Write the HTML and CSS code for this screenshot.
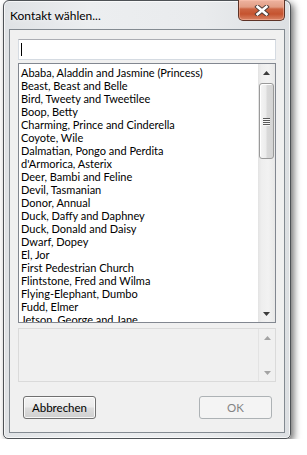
FILE: index.html
```html
<!DOCTYPE html>
<html>
<head>
<meta charset="utf-8">
<link rel="stylesheet" href="styles.css">
</head>
<body>
<div class="window">
  <div class="titlebar">
    <span class="title">Kontakt wählen...</span>
    <div class="close">
      <svg width="16" height="11" viewBox="0 0 16 11">
        <path d="M3.5 1.8 L12.5 9.2 M12.5 1.8 L3.5 9.2" stroke="#4a3a36" stroke-width="4.4" stroke-linecap="square" fill="none"/>
        <path d="M3.5 1.8 L12.5 9.2 M12.5 1.8 L3.5 9.2" stroke="#ffffff" stroke-width="2.6" stroke-linecap="square" fill="none"/>
      </svg>
    </div>
  </div>
  <div class="client">
    <div class="search"><span class="caret"></span></div>
    <div class="list">
      <ul class="items">
        <li>Ababa, Aladdin and Jasmine (Princess)</li>
        <li>Beast, Beast and Belle</li>
        <li>Bird, Tweety and Tweetilee</li>
        <li>Boop, Betty</li>
        <li>Charming, Prince and Cinderella</li>
        <li>Coyote, Wile</li>
        <li>Dalmatian, Pongo and Perdita</li>
        <li>d'Armorica, Asterix</li>
        <li>Deer, Bambi and Feline</li>
        <li>Devil, Tasmanian</li>
        <li>Donor, Annual</li>
        <li>Duck, Daffy and Daphney</li>
        <li>Duck, Donald and Daisy</li>
        <li>Dwarf, Dopey</li>
        <li>El, Jor</li>
        <li>First Pedestrian Church</li>
        <li>Flintstone, Fred and Wilma</li>
        <li>Flying-Elephant, Dumbo</li>
        <li>Fudd, Elmer</li>
        <li>Jetson, George and Jane</li>
      </ul>
      <div class="scrollbar">
        <div class="sb-btn"><svg width="7" height="4" viewBox="0 0 7 4"><path d="M0 4 L3.5 0 L7 4 Z" fill="#3c3c3c"/></svg></div>
        <div class="sb-track">
          <div class="thumb">
            <span class="grip"></span><span class="grip"></span><span class="grip"></span><span class="grip"></span>
          </div>
        </div>
        <div class="sb-btn"><svg width="7" height="4" viewBox="0 0 7 4"><path d="M0 0 L7 0 L3.5 4 Z" fill="#3c3c3c"/></svg></div>
      </div>
    </div>
    <div class="detail">
      <div class="detail-body"></div>
      <div class="scrollbar disabled">
        <div class="sb-btn"><svg width="7" height="4" viewBox="0 0 7 4"><path d="M0 4 L3.5 0 L7 4 Z" fill="#a3a3a3"/></svg></div>
        <div class="sb-track"></div>
        <div class="sb-btn"><svg width="7" height="4" viewBox="0 0 7 4"><path d="M0 0 L7 0 L3.5 4 Z" fill="#a3a3a3"/></svg></div>
      </div>
    </div>
    <div class="buttons">
      <button class="btn">Abbrechen</button>
      <button class="btn" disabled>OK</button>
    </div>
  </div>
</div>
</body>
</html>
```

FILE: styles.css
```css
html, body {
  margin: 0;
  padding: 0;
  background: #ffffff;
}

body {
  font-family: Lato, Roboto, sans-serif;
  font-size: 12px;
  color: #000;
}

.window {
  margin-left: 3px;
  width: 286px;
  height: 437px;
  border: 1px solid #4e5256;
  border-radius: 6px 6px 5px 5px;
  background: linear-gradient(90deg, #dfe2e5 0%, #eceef0 30%, #e9ebed 70%, #dcdfe2 100%);
  box-shadow: 3px 3px 7px rgba(0, 0, 0, 0.55), inset 0 0 0 1px rgba(255, 255, 255, 0.7);
  display: flex;
  flex-direction: column;
}

.titlebar {
  height: 28px;
  display: flex;
  align-items: flex-start;
  padding-left: 6px;
  padding-right: 5px;
}

.title {
  margin-top: 7px;
  font-size: 12px;
  line-height: 15px;
  color: #000;
  text-shadow: 0 0 6px rgba(255, 255, 255, 0.9);
}

.close {
  margin-left: auto;
  margin-top: -1px;
  width: 45px;
  height: 20px;
  border: 1px solid #5d3226;
  border-top: none;
  border-radius: 0 0 5px 5px;
  background: linear-gradient(180deg, #eeb4a0 0%, #e29d84 35%, #cc6442 45%, #c5532f 70%, #d98466 100%);
  box-shadow: inset 0 0 0 1px rgba(255, 200, 180, 0.45);
  display: flex;
  align-items: center;
  justify-content: center;
}

.close svg {
  display: block;
}

.client {
  margin: 0 5px;
  height: 402px;
  border: 1px solid #838a91;
  background: #f0f0f0;
  display: flex;
  flex-direction: column;
  padding: 0 8px;
}

.search {
  margin-top: 9px;
  height: 19px;
  border: 1px solid #d5dbe2;
  border-top-color: #abadb3;
  background: #fff;
  display: flex;
  align-items: center;
  padding-left: 2px;
}

.caret {
  width: 1px;
  height: 13px;
  background: #000;
}

.list {
  margin-top: 3px;
  height: 258px;
  border: 1px solid #828790;
  background: #fff;
  display: flex;
  overflow: hidden;
}

.items {
  list-style: none;
  margin: 0;
  padding: 2px 0 0 2px;
  flex: 1;
  overflow: hidden;
}

.items li {
  height: 13px;
  font-size: 11px;
  line-height: 13px;
  white-space: nowrap;
  color: #000;
}

.scrollbar {
  width: 17px;
  display: flex;
  flex-direction: column;
  background: linear-gradient(90deg, #e3e3e3 0%, #eeeeee 20%, #f2f2f2 60%, #e8e8e8 100%);
}

.sb-btn {
  height: 17px;
  display: flex;
  align-items: center;
  justify-content: center;
}

.sb-btn svg {
  display: block;
}

.sb-track {
  flex: 1;
  padding: 2px 0 0 0;
}

.thumb {
  height: 74px;
  margin: 0 1px;
  border: 1px solid #9a9a9a;
  border-radius: 3px;
  background: linear-gradient(90deg, #f5f5f5 0%, #ececec 45%, #d9d9d9 55%, #d4d4d4 100%);
  box-shadow: inset 1px 1px 0 #ffffff;
  display: flex;
  flex-direction: column;
  align-items: center;
  justify-content: center;
  gap: 1px;
}

.grip {
  width: 7px;
  height: 1px;
  background: #5a5a5a;
  box-shadow: 0 1px 0 #f8f8f8;
}

.detail {
  margin-top: 5px;
  height: 52px;
  border: 1px solid #dadada;
  background: #f0f0f0;
  display: flex;
}

.detail-body {
  flex: 1;
}

.scrollbar.disabled {
  background: #f0f0f0;
  border-left: 1px solid #e3e3e3;
  width: 16px;
}

.buttons {
  margin-top: 14px;
  display: flex;
  justify-content: space-between;
  padding: 0 4px 0 5px;
}

.btn {
  width: 73px;
  height: 23px;
  border: 1px solid #707070;
  border-radius: 3px;
  background: linear-gradient(180deg, #f2f2f2 0%, #ebebeb 48%, #dddddd 52%, #cfcfcf 100%);
  box-shadow: inset 0 0 0 1px rgba(255, 255, 255, 0.8);
  font-family: Lato, Roboto, sans-serif;
  font-size: 11.5px;
  color: #000;
  padding: 0;
}

.btn:disabled {
  border-color: #adb2b5;
  background: #f4f4f4;
  box-shadow: none;
  color: #838383;
}
```
